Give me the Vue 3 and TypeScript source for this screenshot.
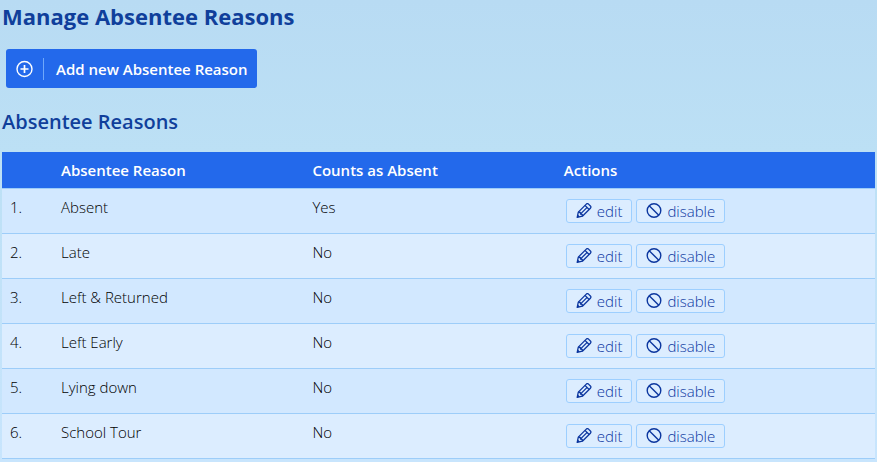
<script setup lang="ts">
interface Reason {
  id: number
  name: string
  absent: boolean
}

const reasons: Reason[] = [
  { id: 1, name: 'Absent', absent: true },
  { id: 2, name: 'Late', absent: false },
  { id: 3, name: 'Left & Returned', absent: false },
  { id: 4, name: 'Left Early', absent: false },
  { id: 5, name: 'Lying down', absent: false },
  { id: 6, name: 'School Tour', absent: false },
]
</script>

<template>
  <main class="page">
    <h1>Manage Absentee Reasons</h1>
    <button type="button" class="add">
      <span class="add-icon">
        <svg width="17" height="18" viewBox="0 0 17 18" fill="none" stroke="currentColor" aria-hidden="true">
          <circle cx="8.5" cy="9" r="7.5" stroke-width="1.4" />
          <path d="M8.500 5v8M4.500 9h8" stroke-width="1.7" />
        </svg>
      </span>
      <span>Add new Absentee Reason</span>
    </button>
    <h2>Absentee Reasons</h2>
    <table>
      <colgroup>
        <col class="col-num" />
        <col class="col-text" />
        <col class="col-text" />
        <col />
      </colgroup>
      <thead>
        <tr>
          <th></th>
          <th scope="col">Absentee Reason</th>
          <th scope="col">Counts as Absent</th>
          <th scope="col">Actions</th>
        </tr>
      </thead>
      <tbody>
        <tr v-for="reason in reasons" :key="reason.id">
          <td>{{ reason.id }}.</td>
          <td>{{ reason.name }}</td>
          <td>{{ reason.absent ? 'Yes' : 'No' }}</td>
          <td class="action-cell">
            <div class="actions">
              <button type="button" class="action">
                <svg width="16" height="16" viewBox="0 0 16 16" fill="none" stroke="currentColor" stroke-width="1.3" stroke-linejoin="round" aria-hidden="true">
                  <path d="M1.200 14.300l1.100-5.200L10.300 1.100q1.100-1.100 2.200 0l1.900 1.900q1.100 1.100 0 2.200l-8 8z" />
                  <path d="M2.300 9.100l2 .4.200 1.500 1.700.3.200 1.900M9 2.400L13.100 6.500M4.600 10.900l6.300-6.300" />
                  <path d="M1.200 14.300l.6-2.800 2.200 2.200z" fill="currentColor" stroke="none" />
                </svg>
                <span>edit</span>
              </button>
              <button type="button" class="action">
                <svg width="16" height="16" viewBox="0 0 16 16" fill="none" stroke="currentColor" stroke-width="1.400" aria-hidden="true">
                  <circle cx="8" cy="7.500" r="6.800" />
                  <path d="M3.200 2.700l9.600 9.600" />
                </svg>
                <span>disable</span>
              </button>
            </div>
          </td>
        </tr>
      </tbody>
    </table>
  </main>
</template>

<style>
body {
  margin: 0;
  min-height: 100vh;
  background: linear-gradient(#b8dbf3, #bce0f5 33%, #c8e5fd);
}
</style>

<style scoped>
.page {
  padding: 2px 2px 0;
  font-family: "Open Sans", "Noto Sans", sans-serif;
  font-size: 15px;
  line-height: 20px;
  color: #000;
}

h1,
h2 {
  margin: 0;
  color: #103f9b;
}

h1 {
  font-size: 22px;
  font-weight: 700;
  line-height: 28px;
}

h2 {
  margin: 20px 0 16px;
  font-size: 20px;
  font-weight: 600;
  line-height: 28px;
}

button {
  display: flex;
  align-items: center;
  font-family: inherit;
  cursor: pointer;
}

.add {
  height: 39px;
  margin: 19px 4px 0;
  padding: 0 9px 0 10px;
  gap: 12px;
  border: 0;
  border-radius: 3px;
  background: #2369eb;
  color: #fff;
  font-size: 15px;
  font-weight: 600;
}

.add-icon {
  display: flex;
  padding: 2px 10px 2px 0;
  border-right: 1px solid #6fa8fa;
}

table {
  width: 100%;
  table-layout: fixed;
  border-collapse: separate;
  border-spacing: 0;
}

.col-num {
  width: 51px;
}

.col-text {
  width: 28.8%;
}

th,
td {
  padding: 8px;
  border-bottom: 1px solid #9dcdf9;
  text-align: left;
  vertical-align: top;
}

th {
  background: #2369eb;
  color: #fff;
  font-weight: 600;
}

td {
  background: #d2e8ff;
  font-weight: 300;
}

tbody tr:nth-child(even) td {
  background: #dcedff;
}

.action-cell {
  padding: 10px;
}

.actions {
  display: flex;
  gap: 4px;
}

.action {
  height: 24px;
  padding: 0 9px;
  gap: 5px;
  border: 1px solid #9dcfff;
  border-radius: 3px;
  background: #dcedff;
  color: #0b369f;
  font-size: 15px;
  font-weight: 300;
}
</style>
